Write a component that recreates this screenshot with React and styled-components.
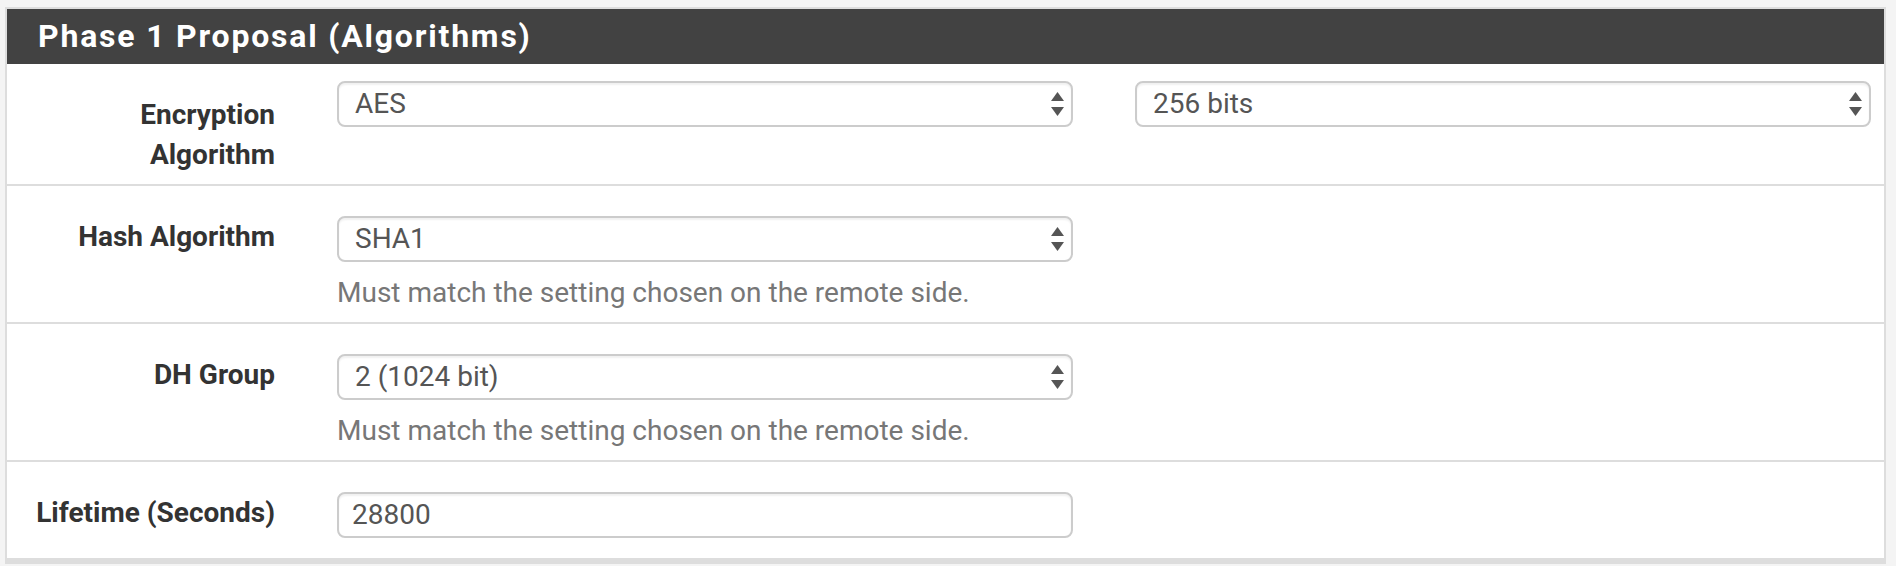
import React from "react";
import styled, { createGlobalStyle } from "styled-components";

const GlobalStyle = createGlobalStyle`
  html, body {
    margin: 0;
    padding: 0;
    background: #f4f4f4;
  }
  body {
    font-family: Roboto, "Liberation Sans", sans-serif;
  }
`;

const Page = styled.div`
  padding: 7px 10px 0 5px;
`;

const Panel = styled.div`
  background: #fff;
  border: 2px solid #dddddd;
  border-bottom-width: 6px;
`;

const Heading = styled.div`
  background: #424242;
  height: 55px;
  padding-left: 31px;
  color: #fff;
  font-weight: 700;
  font-size: 32px;
  line-height: 55px;
  letter-spacing: 1.8px;
`;

const Body = styled.div`
  padding-bottom: 11px;
`;

const Row = styled.div`
  display: grid;
  grid-template-columns: 267px 736px 736px;
  column-gap: 62px;
  padding: 27px 13px 9px 1px;
  border-bottom: ${(p) => (p.$last ? "none" : "2px solid #dddddd")};
`;

const Label = styled.div`
  padding-top: 4px;
  text-align: right;
  font-weight: 700;
  font-size: 28px;
  line-height: 40px;
  color: #333;
`;

const Field = styled.div`
  margin-top: ${(p) => p.$top ?? 3}px;
`;

const Box = styled.div`
  position: relative;
  box-sizing: border-box;
  height: 46px;
  border: 2px solid #cccccc;
  border-radius: 8px;
  background: #fff;
  box-shadow: inset 0 2px 2px rgba(0, 0, 0, 0.06);
  padding-left: ${(p) => (p.$select ? 16 : 13)}px;
  font-size: 28px;
  line-height: 42px;
  color: #555;
  white-space: nowrap;
`;

const Arrows = styled.span`
  position: absolute;
  right: 7px;
  top: 9px;
  display: flex;
  flex-direction: column;
  gap: 6px;
`;

const Help = styled.div`
  margin-top: 11px;
  font-size: 28px;
  line-height: 40px;
  color: #777;
`;

const Caret = () => (
  <Arrows>
    <svg width="13" height="9" viewBox="0 0 13 9">
      <polygon points="6.5,0 13,9 0,9" fill="#555" />
    </svg>
    <svg width="13" height="9" viewBox="0 0 13 9">
      <polygon points="0,0 13,0 6.5,9" fill="#555" />
    </svg>
  </Arrows>
);

const Select = ({ children }) => (
  <Box $select>
    {children}
    <Caret />
  </Box>
);

const HELP = "Must match the setting chosen on the remote side.";

export default function App() {
  return (
    <Page>
      <GlobalStyle />
      <Panel>
        <Heading>Phase 1 Proposal (Algorithms)</Heading>
        <Body>
          <Row>
            <Label>
              Encryption
              <br />
              Algorithm
            </Label>
            <Field $top={-10}>
              <Select>AES</Select>
            </Field>
            <Field $top={-10}>
              <Select>256 bits</Select>
            </Field>
          </Row>
          <Row>
            <Label>Hash Algorithm</Label>
            <Field>
              <Select>SHA1</Select>
              <Help>{HELP}</Help>
            </Field>
          </Row>
          <Row>
            <Label>DH Group</Label>
            <Field>
              <Select>2 (1024 bit)</Select>
              <Help>{HELP}</Help>
            </Field>
          </Row>
          <Row $last>
            <Label>Lifetime (Seconds)</Label>
            <Field>
              <Box>28800</Box>
            </Field>
          </Row>
        </Body>
      </Panel>
    </Page>
  );
}
